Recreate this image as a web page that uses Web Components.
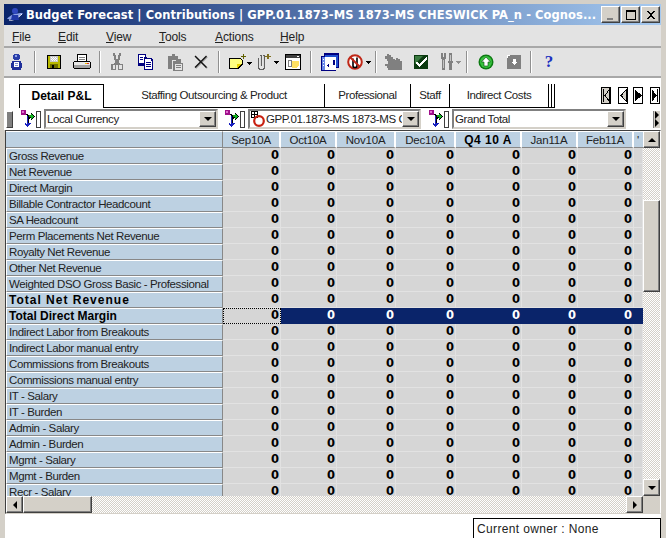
<!DOCTYPE html>
<html>
<head>
<meta charset="utf-8">
<title>Budget Forecast</title>
<style>
  html, body { margin: 0; padding: 0; height: 538px; overflow: hidden; background: #d4d0c8; }
</style>
</head>
<body>
<budget-window>
  <win-titlebar>Budget Forecast | Contributions | GPP.01.1873-MS 1873-MS CHESWICK PA_n - Cognos...</win-titlebar>
  <win-menubar></win-menubar>
  <win-toolbar></win-toolbar>
  <page-tabs></page-tabs>
  <dim-selectors></dim-selectors>
  <data-grid></data-grid>
  <status-strip>Current owner : None</status-strip>
</budget-window>

<script>
(function () {
  /* Small helper: every element gets an open shadow root from css + html */
  function define(name, css, html) {
    customElements.define(name, class extends HTMLElement {
      connectedCallback() {
        if (this.shadowRoot) return;
        this.attachShadow({ mode: 'open' });
        var body = typeof html === 'function' ? html(this) : html;
        this.shadowRoot.innerHTML = '<style>' + css + '</style>' + body;
      }
    });
  }

  var UI_FONT = '"Liberation Sans", Arial, sans-serif';
  var DITHER = 'repeating-conic-gradient(#d4d0c8 0 25%, #fff 0 50%) 0 0 / 2px 2px';
  var BEVEL = 'background:#d4d0c8;border:1px solid;border-color:#fff #404040 #404040 #fff;box-shadow:inset -1px -1px 0 #808080;box-sizing:border-box;';
  var NARROW = 'font-size:11.5px;letter-spacing:-.4px;';

  /* ── icons ── */
  function svg(w, h, body) {
    return '<svg width="' + w + '" height="' + h + '" viewBox="0 0 ' + w + ' ' + h + '" shape-rendering="crispEdges">' + body + '</svg>';
  }
  var ARROW = '<path d="M18 8h6l-3 3z" fill="#000"/>';
  var ICONS = {
    user: svg(16, 18, '<path d="M5 1h5v1h1v4h-1v1H5V6H4V2h1z" fill="#2a3ea8"/><path d="M6 2h2v2H6z" fill="#8fa4e8"/><path d="M3 8h9v2h1v5h-1v2H3v-2H2v-5h1z" fill="#1f2f9a"/><path d="M5 9h5v5H5z" fill="#fff"/><path d="M6 10h3v1H6zM6 12h3v1H6z" fill="#7f8fd0"/>'),
    save: svg(16, 16, '<path d="M1 1h13l1 1v13H1z" fill="#000"/><path d="M2 2h12v12H2z" fill="#b8b800"/><path d="M4 2h8v6H4z" fill="#c8c8c8"/><path d="M5 3h1v1H5zM7 3h1v1H7zM9 3h1v1H9zM6 4h1v1H6zM8 4h1v1H8zM10 4h1v1h-1zM5 5h1v1H5zM7 5h1v1H7zM9 5h1v1H9zM6 6h1v1H6zM8 6h1v1H8zM10 6h1v1h-1z" fill="#fff"/><path d="M4 10h8v4H4z" fill="#6e6e00"/><path d="M6 11h2v3H6z" fill="#000"/>'),
    print: svg(18, 16, '<path d="M4 0h10v7H4z" fill="#000"/><path d="M5 1h8v6H5z" fill="#fff"/><path d="M6 3h6v1H6zM6 5h6v1H6z" fill="#808080"/><path d="M1 7h16v1h1v6h-1v1H1v-1H0V8h1z" fill="#000"/><path d="M1 8h16v3H1z" fill="#e8e8e8"/><path d="M1 11h16v3H1z" fill="#a0a0a0"/><path d="M12 9h2v1h-2z" fill="#e8c000"/><path d="M14 9h2v1h-2z" fill="#e03020"/>'),
    cut: svg(12, 18, '<path d="M2 0h2v2h1v4h2V2h1V0h2v3H9v4H8v3h1v1h3v6H7v-5H5v5H0v-6h3v-1h1V7H3V3H2z" fill="#808080"/><path d="M2 12h2v4H2zM8 12h3v4H8z" fill="#e4e4e4"/>'),
    copy: svg(16, 16, '<path d="M0 0h8v3h1v9H0z" fill="#000080"/><path d="M1 1h6v2H6v6H1z" fill="#fff"/><path d="M6 4h7l2 2v10H6z" fill="#000080"/><path d="M7 5h6v2h1v8H7z" fill="#fff"/><path d="M8 8h5v1H8zM8 10h5v1H8zM8 12h5v1H8zM2 3h3v1H2zM2 5h3v1H2z" fill="#000080"/>'),
    paste: svg(16, 17, '<path d="M1 2h4V0h3v2h3v2L5 4v11H1z" fill="#808080"/><path d="M4 4h7v2H4zM2 4h2v1H2z" fill="#808080"/><path d="M6 7h3V5h5v4h2v8H6z" fill="#808080"/><path d="M8 10h7v6H8z" fill="#e4e4e4"/><path d="M9 11h5v1H9zM9 13h5v1H9z" fill="#808080"/>'),
    del: '<svg width="14" height="14" viewBox="0 0 14 14"><path d="M1 1L12.500 12.500M12.500 1L1 12.500" stroke="#9a9a9a" stroke-width="1.6" transform="translate(.7 .7)"/><path d="M1 1L12.500 12.500M12.500 1L1 12.500" stroke="#111" stroke-width="1.3"/></svg>',
    note: svg(26, 16, '<path d="M1 4h11l3 2v4l-5 5H1z" fill="#000"/><path d="M2 5h10l2 2v3l-5 4H2z" fill="#ffff80"/><path d="M9 14v-4h5" fill="#e8d000"/><path d="M15 0h1v2h2v1h-2v2h-1V3h-2V2h2z" fill="#606000"/>' + ARROW),
    clip: svg(26, 18, '<path d="M3 5h1v10h1v1h3v-1h1V3h1v13H9v1H4v-1H3zM6 3h1v10H6z" fill="#606060"/><path d="M5 2h2v1H5zM8 2h2v1H8z" fill="#606060"/><path d="M5 3h1v10H5zM8 3h1v11H8z" fill="#d8d8d8"/><path d="M12 1h2v2h2v1h-2v2h-2V4h-2V3h2z" fill="#807020"/>' + ARROW),
    web: svg(16, 16, '<path d="M0 0h16v16H0z" fill="#000"/><path d="M1 1h14v14H1z" fill="#fff"/><path d="M1 1h14v3H1z" fill="#404040"/><path d="M12 2h2v1h-2z" fill="#fff"/><path d="M7 7h7v4l-3 3H7z" fill="#ffe060"/><path d="M3 6h4v7H3z" fill="#808080"/><path d="M4 7h2v5H4z" fill="#fff"/>'),
    form: svg(18, 18, '<path d="M0 3h3V0h15v15h-3v3H0z" fill="#000080"/><path d="M4 2h13v12h-2V4H4z" fill="#2050d0"/><path d="M1 4h14v13H1z" fill="#fff"/><path d="M1 4h3v13H1z" fill="#6888e8"/><path d="M2 6h1v1H2zM2 9h1v1H2zM2 12h1v1H2z" fill="#fff"/><path d="M12 7h2v5h-6v2H7v-1H6v-1h1v-1h1v1h4z" fill="#000080"/>'),
    nolink: '<svg width="26" height="18" viewBox="0 0 26 18"><circle cx="8" cy="9" r="6.800" fill="#fff" stroke="#c02818" stroke-width="2"/><path d="M6 5.500v7.500q0 1.500 2 1.500t2-1.500V4.500" fill="none" stroke="#000" stroke-width="1.600"/><path d="M3 4l10 10" stroke="#c02818" stroke-width="2"/><path d="M18 8h6l-3 3z" fill="#000" shape-rendering="crispEdges"/></svg>',
    hand: svg(18, 16, '<path d="M3 0h2v1h2v2h2v2h2v1h1V4h2v1h2v2h2v9H4v-2H3v-2H1v-2h3V7H3V5H1V2h2z" fill="#808080"/>'),
    check: svg(14, 14, '<path d="M0 0h14v14H0z" fill="#0b3a10"/><path d="M1 1l8 0-8 8z" fill="#3a7a40" shape-rendering="auto"/><path d="M12 2h1v3h-1v1h-1v1h-1v1H9v1H8v1H7v1H6v1H5v-1H4v-1H3V9H2V7h2v1h1v1h1V8h1V7h1V6h1V5h1V4h1V3h1z" fill="#fff"/>'),
    tools: svg(22, 18, '<path d="M1 0h2v4h1V0h2v6H5v11H2V6H1z" fill="#808080"/><path d="M9 0h3v8h1v2h-1v7H9v-7H8V8h1z" fill="#808080"/><path d="M3 7h1v8H3zM10 2h1v6h-1z" fill="#c4c4c4"/><path d="M15 8h6l-3 3z" fill="#909090"/>'),
    up: '<svg width="16" height="16" viewBox="0 0 16 16"><circle cx="8" cy="8" r="7.500" fill="#0d7a12"/><circle cx="8" cy="8" r="6" fill="#37c23e"/><path d="M8 3l4.500 5H10v4H6V8H3.500z" fill="#fff" stroke="#064a0a" stroke-width=".6"/></svg>',
    down: svg(14, 14, '<path d="M0 0h14v14H0z" fill="#808080"/><path d="M0 0h3v1H1v2H0z" fill="#fff"/><path d="M6 4h3v3h2l-3.500 3L4 7h2z" fill="#fff"/>'),
    pivot: svg(15, 18, '<path d="M0 0h5v5H0z" fill="#a0108a"/><path d="M1 1h2v2H1z" fill="#e070d0"/><path d="M5 4h2v1h3V3h1v1h1v1h1v1h1v1h-1v1h-1v1h-1v1h-1V8H9v1H8v6H7v-1H6V5H5z" fill="#000"/><path d="M8 5h2v2H8z" fill="#18a018"/><path d="M10 4h1v1h1v1h1v1h-1v1h-1v1h-1z" fill="#10b820"/><path d="M6 6h1v9H6zM4 13h1v1h1v1h1v2H6v-1H5v-1H4z" fill="#1820c0"/><path d="M7 13h3v1H9v1H8v1H7z" fill="#1820c0"/>'),
    grid: '<svg width="15" height="16" viewBox="0 0 15 16"><g shape-rendering="crispEdges"><path d="M0 0h7v7H0z" fill="#000"/><path d="M1 1h2v2H1zM4 1h2v2H4zM1 4h2v2H1zM4 4h2v2H4z" fill="#fff"/></g><circle cx="8" cy="10" r="4.800" fill="none" stroke="#c82010" stroke-width="2.200"/></svg>'
  };
  var NAV = {
    first: '<path d="M0 0h10v17H0z" fill="#000"/><path d="M1 1h8v15H1z" fill="#d4d0c8"/><path d="M2 2h1v13H2z" fill="#000"/><path d="M8 3v11L4 8.500z" fill="#d4d0c8" stroke="#000"/>',
    prev: '<path d="M0 0h10v17H0z" fill="#000"/><path d="M1 1h8v15H1z" fill="#fff"/><path d="M8 3v11L3 8.500z" fill="#d4d0c8" stroke="#000"/>',
    next: '<path d="M0 0h10v17H0z" fill="#000"/><path d="M1 1h8v15H1z" fill="#fff"/><path d="M2 3l6 5.500-6 5.500z" fill="#000" stroke="#000"/>',
    last: '<path d="M0 0h10v17H0z" fill="#000"/><path d="M1 1h8v15H1z" fill="#fff"/><path d="M2 3l4 5.500-4 5.500z" fill="#000" stroke="#000"/><path d="M7 2h1v13H7z" fill="#000"/>'
  };
  function tri(dir) {
    var d = { up: 'M4 0l4 4H0z', down: 'M0 0h8L4 4z', left: 'M4 0v8L0 4z', right: 'M0 0l4 4-4 4z' }[dir];
    var wide = dir === 'up' || dir === 'down';
    return '<svg width="' + (wide ? 8 : 4) + '" height="' + (wide ? 4 : 8) + '" viewBox="0 0 ' + (wide ? '8 4' : '4 8') + '"><path d="' + d + '" fill="#000"/></svg>';
  }

  /* ── window shell ── */
  define('budget-window', `
    :host { display: block; width: 666px; height: 538px; overflow: hidden; box-sizing: border-box;
            padding: 4px 5px 0 4px; background: #d4d0c8; font-family: ${UI_FONT}; }
    .wrap { display: flex; flex-direction: column; height: 100%; }
  `, '<div class="wrap"><slot></slot></div>');

  define('win-titlebar', `
    :host { display: flex; flex: none; align-items: center; height: 21px; box-sizing: border-box; padding: 0 1px 0 2px;
            background: linear-gradient(90deg, #0a246a 0%, #a6caf0 100%); color: #fff;
            font: bold 11.5px "DejaVu Sans", Verdana, sans-serif; white-space: nowrap; }
    .logo { width: 18px; height: 16px; margin-right: 2px; flex: none; }
    .text { flex: 1; overflow: hidden; letter-spacing: 0.06px; }
    .btn { width: 19px; height: 17px; display: flex; ${BEVEL} position: relative; flex: none; }
    .btn + .btn { margin-left: 1px; }
    .btn svg { margin: auto; }
  `, `
    <svg class="logo" viewBox="0 0 18 16"><path d="M1 12C4 8 9 6 17 6c-2 3-8 7-16 6z" fill="#8aa0e8"/><path d="M3 13c4 1 9-2 13-6" stroke="#fff" fill="none"/><circle cx="9" cy="4" r="3" fill="#3048c0"/><path d="M6 8h6l1 5H5z" fill="#2038a8"/></svg>
    <span class="text"><slot></slot></span>
    <span class="btn"><svg width="12" height="12" viewBox="0 0 12 12" shape-rendering="crispEdges"><path d="M2 9h6v2H2z" fill="#808080"/></svg></span>
    <span class="btn"><svg width="12" height="12" viewBox="0 0 12 12" shape-rendering="crispEdges"><path d="M1 1h10v10H1zM2 3v7h8V3z" fill-rule="evenodd" fill="#000"/></svg></span>
    <span class="btn"><svg width="12" height="12" viewBox="0 0 12 12" shape-rendering="crispEdges"><path d="M2 2h2v1h1v1h2V3h1V2h2v1H9v1H8v1H7v2h1v1h1v1h1v1H8V9H7V8H5v1H4v1H2V9h1V8h1V7h1V5H4V4H3V3H2z" fill="#000"/></svg></span>
  `);

  var MENUS = [['F', 'ile', 9, 46], ['E', 'dit', 58, 48], ['V', 'iew', 106, 53], ['T', 'ools', 159, 56], ['A', 'ctions', 215, 65], ['H', 'elp', 280, 40]];
  define('win-menubar', `
    :host { display: flex; flex: none; align-items: center; height: 23px; padding: 2px 0 0 8px; box-sizing: border-box;
            background: #e3e3e3; border-bottom: 2px solid #a8a8a8; font-size: 12px; letter-spacing: -.1px; color: #222; }
    span { flex: none; }
  `, MENUS.map(function (m) {
    return '<span style="width:' + m[3] + 'px"><u>' + m[0] + '</u>' + m[1] + '</span>';
  }).join(''));

  /* [icon, width] / ['|', width] — widths keep each glyph on its column */
  var TOOLS = [['user', 26], ['|', 10], ['save', 28], ['print', 28], ['|', 7], ['cut', 28], ['copy', 30], ['paste', 28], ['del', 24],
    ['|', 12], ['note', 26, 6], ['clip', 28, 6], ['web', 28], ['|', 8], ['form', 30], ['nolink', 24, 5], ['|', 14], ['hand', 20],
    ['check', 36], ['tools', 20, 4], ['|', 16], ['up', 22], ['|0', 3], ['down', 28], ['|', 6], ['?', 30]];
  define('win-toolbar', `
    :host { display: flex; align-items: center; height: 30px; box-sizing: border-box; background: #e3e3e3;
            border-bottom: 2px solid #a8a8a8; flex: none; }
    .cell { flex: none; display: flex; align-items: center; justify-content: center; height: 100%; }
    .sep { width: 2px; height: 22px; background: #909090; border-right: 1px solid #fff; box-sizing: border-box; }
    .help { font: bold 17px "Liberation Serif", serif; color: #2030c0; }
    svg { display: block; overflow: visible; }
  `, TOOLS.map(function (t) {
    var inner = t[0] === '|' ? '<div class="sep"></div>' :
      t[0] === '|0' ? '' :
      t[0] === '?' ? '<span class="help">?</span>' : ICONS[t[0]];
    var nudge = t[2] ? ' style="width:' + t[1] + 'px;padding-left:' + t[2] + 'px;box-sizing:border-box"' : ' style="width:' + t[1] + 'px"';
    return '<div class="cell"' + nudge + '>' + inner + '</div>';
  }).join(''));

  var TABS = [['Detail P&amp;L', 85, 1], ['Staffing Outsourcing &amp; Product', 221], ['Professional', 86], ['Staff', 39], ['Indirect Costs', 98, 0, 1]];
  define('page-tabs', `
    :host { display: flex; height: 30px; padding: 6px 0 0 15px; box-sizing: border-box; background: #fff; flex: none; ${NARROW} }
    .tab { flex: none; display: flex; align-items: center; justify-content: center; box-sizing: border-box;
           height: 24px; border-bottom: 1px solid #000; border-right: 1px solid #000; padding-bottom: 1px; color: #222; }
    .tab.last { border-right: 0; }
    .tab.on { border: 1px solid #000; border-bottom: 0; font: bold 12px ${UI_FONT}; letter-spacing: 0; color: #000; padding-bottom: 2px; }
    .end { width: 7px; height: 24px; box-sizing: border-box; border-bottom: 1px solid #000; flex: none;
           background: repeating-linear-gradient(90deg, #000 0 1px, #fff 1px 3px) 0 0 / 7px 23px no-repeat; }
    nav { display: flex; margin-left: 46px; margin-top: 3px; }
    nav svg { display: block; flex: none; }
    nav svg:nth-child(2), nav svg:nth-child(4) { margin-left: 7px; }
    nav svg:nth-child(3) { margin-left: 5px; }
  `, TABS.map(function (t) {
    return '<div class="tab' + (t[2] ? ' on' : '') + (t[3] ? ' last' : '') + '" style="width:' + t[1] + 'px">' + t[0] + '</div>';
  }).join('') + '<div class="end"></div><nav>' +
    ['first', 'prev', 'next', 'last'].map(function (n) {
      return svg(10, 17, NAV[n]);
    }).join('') + '</nav>');

  /* ── dimension selectors ── */
  define('dim-combo', `
    :host { display: flex; flex: none; align-items: center; box-sizing: border-box; height: 20px; background: #fff; overflow: hidden;
            border: 2px solid; border-color: #808080 #d4d0c8 #d4d0c8 #808080; ${NARROW} color: #222; white-space: nowrap; }
    .v { flex: 1; min-width: 0; overflow: hidden; padding-left: 1px; display: flex; align-items: center; }
    .b { width: 17px; height: 16px; flex: none; display: flex; ${BEVEL} }
    .b svg { margin: auto; }
  `, function () {
    return '<div class="v"><slot name="icon"></slot><slot></slot></div><div class="b">' + tri('down') + '</div>';
  });

  define('dim-selectors', `
    :host { display: flex; align-items: center; height: 22px; background: #fff; flex: none; }
    .grip { width: 7px; height: 17px; background: #808080; border: 1px solid; border-color: #fff #404040 #404040 #fff; flex: none; margin-left: 2px; box-sizing: border-box; }
    .pv { flex: none; width: 15px; height: 18px; }
    .pv svg { display: block; }
    .tick { width: 3px; height: 15px; border: 1px solid #404040; margin-right: 3px; flex: none; }
    .end { margin-left: 27px; width: 7px; height: 17px; background: #d4d0c8; flex: none; display: flex; flex-direction: column; align-items: center; justify-content: space-around; border-left: 1px solid #808080; box-sizing: border-box; }
    .end svg { display: block; }
  `, '<div class="grip"></div>' +
    '<div class="pv" style="margin-left:8px">' + ICONS.pivot + '</div><div class="tick"></div><dim-combo style="width:174px">Local Currency</dim-combo>' +
    '<div class="pv" style="margin-left:7px">' + ICONS.pivot + '</div><div class="tick"></div><dim-combo style="width:173px"><span slot="icon" style="display:flex;flex:none">' + ICONS.grid + '</span>GPP.01.1873-MS 1873-MS CHESWICK</dim-combo>' +
    '<div class="pv" style="margin-left:8px">' + ICONS.pivot + '</div><div class="tick"></div><dim-combo style="width:174px">Grand Total</dim-combo>' +
    '<div class="end">' + tri('right') + tri('right') + '</div>');

  /* ── the data grid ── */
  var COLS = [['Sep10A', 58], ['Oct10A', 56], ['Nov10A', 59], ['Dec10A', 60], ['Q4 10 A', 66, 1], ['Jan11A', 56], ['Feb11A', 56], ['', 9]];
  var ROWS = ['Gross Revenue', 'Net Revenue', 'Direct Margin', 'Billable Contractor Headcount', 'SA Headcount', 'Perm Placements Net Revenue',
    'Royalty Net Revenue', 'Other Net Revenue', 'Weighted DSO Gross Basic - Professional', '*Total Net Revenue', '*Total Direct Margin',
    'Indirect Labor from Breakouts', 'Indirect Labor manual entry', 'Commissions from Breakouts', 'Commissions manual entry',
    'IT - Salary', 'IT - Burden', 'Admin - Salary', 'Admin - Burden', 'Mgmt - Salary', 'Mgmt - Burden', 'Recr - Salary'];

  function gridHtml() {
    var h = '<div class="h corner"></div>';
    COLS.forEach(function (c, i) {
      h += '<div class="h' + (c[2] ? ' b' : '') + (i === 7 ? ' stub' : '') + '">' + (i === 7 ? '&#39;' : c[0]) + '</div>';
    });
    ROWS.forEach(function (r, ri) {
      var bold = r.charAt(0) === '*';
      // the two bold totals are nearly the same width in the original font
      var st = ri === 9 ? ' style="letter-spacing:1px"' : '';
      h += '<div class="r' + (bold ? ' b' : '') + '"' + st + '>' + r.replace('*', '') + '</div>';
      COLS.forEach(function (c, ci) {
        var cls = 'c';
        if (ri === 10) cls += ci === 0 ? ' focus' : ' sel';
        h += '<div class="' + cls + '">' + (ci === 7 ? '' : '0') + '</div>';
      });
    });
    return h;
  }

  define('data-grid', `
    :host { display: grid; grid-template-columns: 637px 17px; grid-template-rows: 365px 17px; width: 656px; flex: none;
            box-sizing: border-box; border: 1px solid; border-color: #404040 #fff #d4d0c8 #404040; margin-left: 1px; background: ${DITHER}; ${NARROW} }
    .sheet { display: grid; grid-template-columns: 217px 58px 56px 59px 60px 66px 56px 56px 9px; grid-template-rows: 17px; grid-auto-rows: 16px; overflow: hidden; height: 365px; align-content: start; background: #fff; }
    .h, .r, .c { box-sizing: border-box; white-space: nowrap; overflow: hidden; }
    .h { background: #bdd1e2; color: #222; display: flex; align-items: center; justify-content: center; border-right: 2px solid #fff; border-bottom: 1px solid #888; border-top: 1px solid #fff; letter-spacing: -.2px; }
    .h.corner { border-right: 1px solid #888; }
    .h.b { font: bold 12px ${UI_FONT}; color: #000; letter-spacing: .5px; }
    .h.stub { justify-content: flex-start; padding-left: 3px; border-right: 0; }
    .r { background: #bdd1e2; color: #222; padding-left: 2px; display: flex; align-items: center; border-bottom: 1px solid #888; border-top: 1px solid #fff; border-right: 1px solid #888; border-left: 1px solid #fff; }
    .r.b { font: bold 12px ${UI_FONT}; color: #000; letter-spacing: 0; }
    .c { background: #d6d6d6; border-right: 1px solid #e2e2e2; border-bottom: 1px solid #e2e2e2; text-align: right; padding-right: 1px; font: bold 11.5px/15px "DejaVu Sans", sans-serif; letter-spacing: 0; color: #000; }
    .c.sel { background: #0a246a; color: #fff; border-color: #0a246a; }
    .c.focus { outline: 1px dotted #000; outline-offset: -1px; }
    .vbar { display: flex; flex-direction: column; background: ${DITHER}; }
    .hbar { display: flex; background: ${DITHER}; height: 17px; }
    .btn { width: 17px; height: 17px; display: flex; ${BEVEL} flex: none; }
    .btn svg { margin: auto; }
    .thumb { ${BEVEL} flex: none; }
    .vbar .thumb { width: 17px; height: 92px; margin-top: 52px; }
    .vbar .dn { margin-top: auto; }
    .hbar .thumb { width: 69px; height: 17px; }
    .hbar .rt { margin-left: auto; }
    .corner2 { background: #d4d0c8; }
  `, '<div class="sheet">' + gridHtml() + '</div>' +
    '<div class="vbar"><div class="btn">' + tri('up') + '</div><div class="thumb"></div><div class="btn dn">' + tri('down') + '</div></div>' +
    '<div class="hbar"><div class="btn">' + tri('left') + '</div><div class="thumb"></div><div class="btn rt">' + tri('right') + '</div></div>' +
    '<div class="corner2"></div>');

  define('status-strip', `
    :host { display: block; flex: 1; min-height: 0; background: #fff; padding: 4px 0 0 468px; margin-left: 1px; box-sizing: border-box; font-size: 12px; color: #222; }
    .box { width: 188px; height: 40px; border: 1px solid #000; box-sizing: border-box; padding: 3px; letter-spacing: .35px; background: #fff; }
  `, '<div class="box"><slot></slot></div>');
})();
</script>
</body>
</html>
